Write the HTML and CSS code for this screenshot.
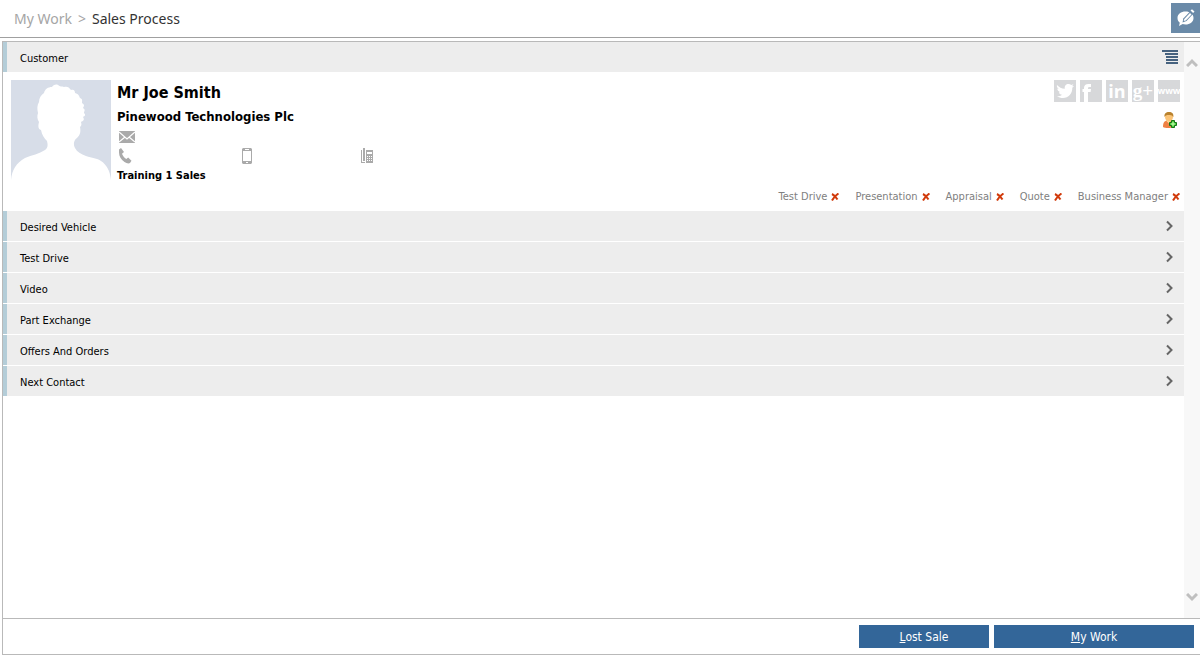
FILE: index.html
```html
<!DOCTYPE html>
<html lang="en">
<head>
    <title>Sales Process</title>
    <meta charset="UTF-8">
    <meta name="viewport" content="width=device-width, initial-scale=1.0">
    <link rel="stylesheet" href="styles.css">
</head>
<body>
    <header class="topbar">
        <nav class="breadcrumb">
            <a href="#">My Work</a>
            <span class="divider">&gt;</span>
            <h1>Sales Process</h1>
        </nav>
        <button class="feedback" type="button" aria-label="Feedback">
            <svg width="29" height="30" viewBox="0 0 29 30">
                <path d="M6.500 15c0-4 3.500-6.500 8-6.500S22.500 11 22.500 15s-3.500 6.500-8 6.500c-1.200 0-2 0-2.800-.4L8 23l.8-3.300C7.300 18.500 6.500 17 6.500 15z" fill="#fff"/>
                <path d="M11.500 19.500l.8-4 7.200-7.500 3 2.500-7 7.500z" fill="#6a8aa8"/>
                <path d="M13.300 16l5.700-6 1.500 1.400-5.700 6-2.100.6z" fill="#fff"/>
                <path d="M19.500 7.500L21 6.300l2.500 2.200-1.400 1.500z" fill="#fff"/>
            </svg>
        </button>
    </header>

    <main class="panel">
        <div class="scroll-area">
            <div class="content">
                <div class="section-bar">
                    <h2>Customer</h2>
                    <button class="icon-button menu" type="button" aria-label="Customer menu">
                        <svg width="16" height="14" viewBox="0 0 16 14" fill="#46627f">
                            <path d="M0 0h16v2H0zM3 3h13v2H3zM4 6h12v2H4zM4 9h12v2H4zM4 12h12v2H4z"/>
                        </svg>
                    </button>
                </div>

                <section class="customer">
                    <svg class="avatar" width="100" height="100" viewBox="0 0 100 100">
                        <path d="M0 0h100v100H0z" fill="#d7dde8"/>
                        <path d="M0 100C1 90 5 83 14 78c7-3 14-4 20-8 3-2 3-5 2-9-3-3-5-6-6-11-3-1-3-4-2-8-2-3-2-6-1-9-1-4-1-8 1-11 0-4 2-7 5-9 1-4 4-6 8-6 1-2 4-3 6-2 2 2 4 1 6 2 3-1 5 0 7 3 3-1 4 1 4 3 4 1 4 3 5 5 3 1 2 3 2 5 3 2 2 3 1 5 3 2 1 3 1 5 2 2 1 3-1 4 2 3 0 4-2 5 1 3 0 4-1 5 1 5 0 8-3 11-3 2-4 6-2 10 2 4 6 6 11 8 6 2 11 2 15 5 6 4 9 10 10 19z" fill="#fff"/>
                    </svg>

                    <div class="details">
                        <p class="name">Mr Joe Smith</p>
                        <p class="company">Pinewood Technologies Plc</p>
                        <div class="contact-row">
                            <svg width="16" height="12" viewBox="0 0 16 12">
                                <path d="M0 0h16v12H0z" fill="#aaa"/>
                                <path d="M0 1l8 7 8-7M0 11l6-5M16 11l-6-5" fill="none" stroke="#fff" stroke-width="1.200"/>
                            </svg>
                        </div>
                        <div class="contact-row phones">
                            <svg width="14" height="16" viewBox="0 0 14 16" fill="#aaa">
                                <path d="M0 1.500L2 0l3 4-2 1.800c.8 2 2.300 4 4.300 5.200l1.900-1.400 3.300 3.200-1.500 2.200c-1.300.8-3.500.4-5.500-1C2 11.800 0 8 0 4.500z"/>
                            </svg>
                            <svg width="10" height="16" viewBox="0 0 10 16">
                                <path fill-rule="evenodd" d="M1 0h8l1 1v14l-1 1H1l-1-1V1zM1 3v10h8V3zM3 1v1h4V1zM4 14v1h2v-1z" fill="#aaa"/>
                            </svg>
                            <svg width="12" height="16" viewBox="0 0 12 16" fill="#aaa">
                                <path d="M0 2h1v12h3v1H0zM2 0h2v13H2z"/>
                                <path fill-rule="evenodd" d="M5 2h7v13H5zM6 4v2h5V4zM6 8v1h1V8zM8 8v1h1V8zM10 8v1h1V8zM6 10v1h1v-1zM8 10v1h1v-1zM10 10v1h1v-1zM6 12v1h1v-1zM8 12v1h1v-1zM10 12v1h1v-1z"/>
                            </svg>
                        </div>
                        <p class="branch">Training 1 Sales</p>
                    </div>

                    <div class="links">
                        <div class="social">
                            <a href="#" aria-label="Twitter">
                                <svg width="22" height="22" viewBox="0 0 22 22" fill="#fff">
                                    <path d="M3 5c2.200 2.500 4.500 3.600 7.800 3.800C10.300 6 12 4 14.500 4c1.100 0 2 .4 2.700 1.100L19.500 4.300l-1.400 2 1.900-.4-1.700 1.900C18.500 13.500 14.500 18 9 18c-2.300 0-4.300-.6-6-1.800 1.900.1 3.600-.4 5-1.500-1.700-.1-2.700-1-3.200-2.400h1.500C4.500 11.700 3.300 10.400 3.300 8.600l1.500.4C3.100 7.800 2.500 6.500 3 5z"/>
                                </svg>
                            </a>
                            <a href="#" aria-label="Facebook">
                                <svg width="22" height="22" viewBox="0 0 22 22" fill="#fff">
                                    <path d="M4 22V12H2.500V9H4V8c0-2.800 1.500-4 4.500-4H11v3H9.500C8.300 7 8 7.500 8 8.500V9h3l-.4 3H8v10z"/>
                                </svg>
                            </a>
                            <a href="#" class="linkedin">in</a>
                            <a href="#" class="google">g+</a>
                            <a href="#" class="web">www</a>
                        </div>
                        <button class="icon-button" type="button" aria-label="Add contact">
                            <svg width="16" height="18" viewBox="0 0 16 18">
                                <path d="M1 16c0-4 1-6.500 5-6.500s5 2.500 5 6.500c-2 1.300-8 1.300-10 0z" fill="#ee8144"/>
                                <path d="M4 9.500l3 3 2-3z" fill="#ffdca0"/>
                                <ellipse cx="7" cy="6" rx="4" ry="4.500" fill="#fbc477"/>
                                <path d="M2.500 6C2 2.500 4 1 7 1s5 1.700 4.300 5.200C10.500 4.500 9 3.800 7.500 4 5.500 3.800 3.500 4 2.500 6z" fill="#b9822d"/>
                                <path d="M9.500 9.500h3v2h2v3h-2v2h-3v-2h-2v-3h2z" fill="#49ce3b" stroke="#137516"/>
                                <path d="M11 11v4M9 13h4" stroke="#c9ffb4"/>
                            </svg>
                        </button>
                    </div>

                    <ul class="statuses">
                        <li>Test Drive <svg class="cross" width="8" height="8" viewBox="0 0 8 8"><path d="M1 1c2 1 4 3 5.500 5.500M7.500.5C5 2 3 4 1 7.500"/></svg></li>
                        <li>Presentation <svg class="cross" width="8" height="8" viewBox="0 0 8 8"><path d="M1 1c2 1 4 3 5.500 5.500M7.500.5C5 2 3 4 1 7.500"/></svg></li>
                        <li>Appraisal <svg class="cross" width="8" height="8" viewBox="0 0 8 8"><path d="M1 1c2 1 4 3 5.500 5.500M7.500.5C5 2 3 4 1 7.500"/></svg></li>
                        <li>Quote <svg class="cross" width="8" height="8" viewBox="0 0 8 8"><path d="M1 1c2 1 4 3 5.500 5.500M7.500.5C5 2 3 4 1 7.500"/></svg></li>
                        <li>Business Manager <svg class="cross" width="8" height="8" viewBox="0 0 8 8"><path d="M1 1c2 1 4 3 5.500 5.500M7.500.5C5 2 3 4 1 7.500"/></svg></li>
                    </ul>
                </section>

                <div class="sections">
                    <button class="section-bar" type="button">Desired Vehicle <svg class="chevron" width="8" height="12" viewBox="0 0 8 12"><path d="M2 1.500L6.500 6 2 10.500"/></svg></button>
                    <button class="section-bar" type="button">Test Drive <svg class="chevron" width="8" height="12" viewBox="0 0 8 12"><path d="M2 1.500L6.500 6 2 10.500"/></svg></button>
                    <button class="section-bar" type="button">Video <svg class="chevron" width="8" height="12" viewBox="0 0 8 12"><path d="M2 1.500L6.500 6 2 10.500"/></svg></button>
                    <button class="section-bar" type="button">Part Exchange <svg class="chevron" width="8" height="12" viewBox="0 0 8 12"><path d="M2 1.500L6.500 6 2 10.500"/></svg></button>
                    <button class="section-bar" type="button">Offers And Orders <svg class="chevron" width="8" height="12" viewBox="0 0 8 12"><path d="M2 1.500L6.500 6 2 10.500"/></svg></button>
                    <button class="section-bar" type="button">Next Contact <svg class="chevron" width="8" height="12" viewBox="0 0 8 12"><path d="M2 1.500L6.500 6 2 10.500"/></svg></button>
                </div>
            </div>

            <div class="scrollbar">
                <button class="icon-button" type="button" aria-label="Scroll up">
                    <svg width="12" height="9" viewBox="0 0 12 9"><path d="M1 8l5-5 5 5"/></svg>
                </button>
                <button class="icon-button" type="button" aria-label="Scroll down">
                    <svg width="12" height="9" viewBox="0 0 12 9"><path d="M1 1l5 5 5-5"/></svg>
                </button>
            </div>
        </div>

        <footer class="actions">
            <button class="action" type="button" accesskey="l"><span><u>L</u>ost Sale</span></button>
            <button class="action wide" type="button" accesskey="m"><span><u>M</u>y Work</span></button>
        </footer>
    </main>
</body>
</html>
```
FILE: styles.css
```css
* {
    box-sizing: border-box;
}

body {
    display: flex;
    flex-direction: column;
    height: 100vh;
    margin: 0;
    padding-bottom: 4px;
    background: #fff;
    color: #000;
    font-family: Tahoma, "DejaVu Sans Condensed", "Noto Sans", sans-serif;
    font-size: 11px;
}

h1, h2, p, ul {
    margin: 0;
    padding: 0;
    font-size: inherit;
    font-weight: inherit;
}

button {
    padding: 0;
    border: 0;
    font: inherit;
    cursor: pointer;
}

svg {
    display: block;
    flex: none;
}

.icon-button {
    background: none;
}

/* Top bar */
.topbar {
    display: flex;
    justify-content: space-between;
    align-items: flex-start;
    height: 38px;
    padding-top: 3px;
    border-bottom: 1px solid #a0a0a0;
}

.breadcrumb {
    display: flex;
    gap: 6px;
    padding-left: 14px;
    font-family: Tahoma, "Noto Sans", sans-serif;
    font-size: 14px;
    line-height: 31px;
    color: #333;
}

.breadcrumb a,
.divider {
    color: #a5a5a5;
    text-decoration: none;
}

.feedback {
    background: #6a8aa8;
}

/* Main panel */
.panel {
    display: flex;
    flex: 1;
    flex-direction: column;
    min-height: 0;
    margin: 3px 0 0 2px;
    border: 1px solid #b9b9b9;
    border-right: 0;
}

.scroll-area {
    display: flex;
    flex: 1;
    min-height: 0;
}

.content {
    flex: 1;
    overflow: hidden;
}

.section-bar {
    display: flex;
    justify-content: space-between;
    align-items: center;
    width: 100%;
    height: 30px;
    padding: 3px 11px 0 13px;
    border-left: 4px solid #b4cdd8;
    background: #ededed;
    color: #000;
    line-height: 20px;
    text-align: left;
}

.section-bar .menu {
    margin: 0 -5px 3px 0;
}

.sections {
    display: flex;
    flex-direction: column;
    gap: 1px;
}

.chevron {
    margin-bottom: 3px;
    fill: none;
    stroke: #666;
    stroke-width: 2;
}

/* Customer details */
.customer {
    display: grid;
    grid-template-columns: auto 1fr auto;
    grid-template-rows: 107px auto;
    column-gap: 6px;
    padding: 8px 4px 4px 8px;
}

.details {
    font-weight: bold;
}

.name {
    font-size: 16px;
    line-height: 26px;
}

.company {
    font-size: 13px;
    line-height: 21px;
}

.contact-row {
    display: flex;
    align-items: center;
    height: 19px;
    padding-left: 2px;
}

.phones {
    gap: 109px;
}

.branch {
    font-size: 11px;
    line-height: 22px;
}

.links {
    display: flex;
    flex-direction: column;
    align-items: flex-end;
    gap: 9px;
}

.links .icon-button {
    margin-right: 2px;
}

.social {
    display: flex;
    gap: 4px;
}

.social a {
    width: 22px;
    height: 22px;
    background: #d7d8da;
    color: #fff;
    font-family: "Open Sans", sans-serif;
    font-weight: bold;
    line-height: 22px;
    text-align: center;
    text-decoration: none;
}

.social .linkedin {
    font-size: 18px;
}

.social .google {
    font-family: "Liberation Serif", serif;
    font-size: 19px;
}

.social .web {
    display: flex;
    justify-content: center;
    font-size: 9px;
}

.statuses {
    display: flex;
    grid-column: 1 / -1;
    justify-content: flex-end;
    gap: 16px;
    color: #808080;
    line-height: 20px;
    list-style: none;
}

.statuses li {
    display: flex;
    align-items: center;
    gap: 4px;
}

.cross {
    fill: none;
    stroke: #d13a0b;
    stroke-width: 2;
}

/* Scrollbar */
.scrollbar {
    display: flex;
    flex: none;
    flex-direction: column;
    justify-content: space-between;
    align-items: center;
    width: 16px;
    padding: 16px 0;
    background: #f8f8f8;
}

.scrollbar svg {
    fill: none;
    stroke: #bfbfbf;
    stroke-width: 3;
}

/* Footer buttons */
.actions {
    display: flex;
    justify-content: flex-end;
    gap: 5px;
    padding: 6px 6px 6px 0;
    border-top: 1px solid #b9b9b9;
}

.action {
    width: 130px;
    height: 23px;
    background: #336699;
    color: #fff;
    font-size: 12px;
}

.action.wide {
    width: 200px;
}
```
